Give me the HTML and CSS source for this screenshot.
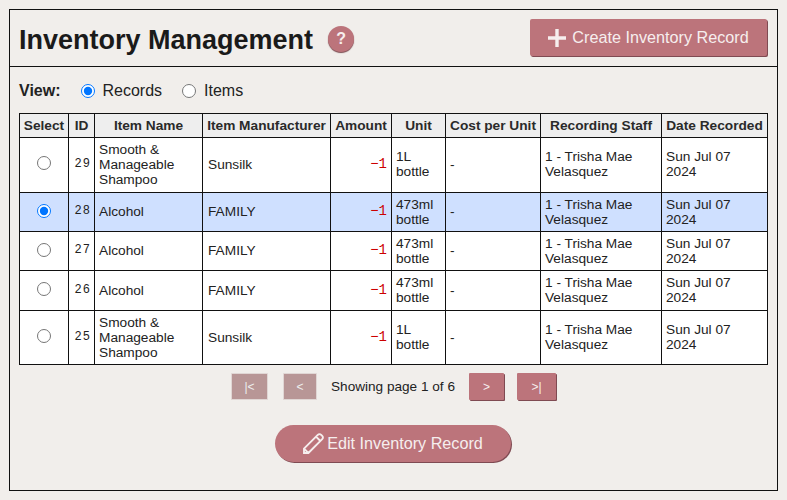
FILE: index.html
```html
<!DOCTYPE html>
<html lang="en">
<head>
    <meta charset="UTF-8">
    <meta name="viewport" content="width=device-width, initial-scale=1.0">
    <title>Inventory Management</title>
    <link rel="stylesheet" href="styles.css">
</head>
<body>

<div class="panel">
    <header class="panel-head">
        <h1>Inventory Management</h1>
        <span class="help">?</span>
        <button type="button" class="btn btn-create">
            <svg class="plus" width="18" height="18" viewBox="0 0 18 18"><path d="M9 0v18M0 9h18" stroke="#f6eeee" stroke-width="3.4" fill="none"/></svg>
            Create Inventory Record
        </button>
    </header>

    <div class="panel-body">
        <form class="view-row">
            <span class="view-label">View:</span>
            <label><input type="radio" name="view" checked> Records</label>
            <label><input type="radio" name="view"> Items</label>
        </form>

        <table class="records">
            <colgroup>
                <col class="c-select"><col class="c-id"><col class="c-name"><col class="c-maker"><col class="c-amount">
                <col class="c-unit"><col class="c-cost"><col class="c-staff"><col class="c-date">
            </colgroup>
            <thead>
                <tr>
                    <th>Select</th><th>ID</th><th>Item Name</th><th>Item Manufacturer</th><th>Amount</th>
                    <th>Unit</th><th>Cost per Unit</th><th>Recording Staff</th><th>Date Recorded</th>
                </tr>
            </thead>
            <tbody>
                <tr class="tall top">
                    <td class="sel"><input type="radio" name="rec"></td><td class="num">29</td>
                    <td>Smooth &amp; Manageable Shampoo</td><td class="maker">Sunsilk</td><td class="amt">&minus;1</td>
                    <td>1L bottle</td><td>-</td><td>1 - Trisha Mae Velasquez</td><td>Sun Jul 07 2024</td>
                </tr>
                <tr class="picked">
                    <td class="sel"><input type="radio" name="rec" checked></td><td class="num">28</td>
                    <td>Alcohol</td><td class="maker">FAMILY</td><td class="amt">&minus;1</td>
                    <td>473ml bottle</td><td>-</td><td>1 - Trisha Mae Velasquez</td><td>Sun Jul 07 2024</td>
                </tr>
                <tr>
                    <td class="sel"><input type="radio" name="rec"></td><td class="num">27</td>
                    <td>Alcohol</td><td class="maker">FAMILY</td><td class="amt">&minus;1</td>
                    <td>473ml bottle</td><td>-</td><td>1 - Trisha Mae Velasquez</td><td>Sun Jul 07 2024</td>
                </tr>
                <tr class="wide">
                    <td class="sel"><input type="radio" name="rec"></td><td class="num">26</td>
                    <td>Alcohol</td><td class="maker">FAMILY</td><td class="amt">&minus;1</td>
                    <td>473ml bottle</td><td>-</td><td>1 - Trisha Mae Velasquez</td><td>Sun Jul 07 2024</td>
                </tr>
                <tr class="tall">
                    <td class="sel"><input type="radio" name="rec"></td><td class="num">25</td>
                    <td>Smooth &amp; Manageable Shampoo</td><td class="maker">Sunsilk</td><td class="amt">&minus;1</td>
                    <td>1L bottle</td><td>-</td><td>1 - Trisha Mae Velasquez</td><td>Sun Jul 07 2024</td>
                </tr>
            </tbody>
        </table>

        <div class="pager">
            <button type="button" class="btn page-btn first" disabled>|&lt;</button>
            <button type="button" class="btn page-btn prev" disabled>&lt;</button>
            <span class="page-info">Showing page 1 of 6</span>
            <button type="button" class="btn page-btn next">&gt;</button>
            <button type="button" class="btn page-btn last">&gt;|</button>
        </div>

        <div class="actions">
            <button type="button" class="btn btn-edit">
                <svg class="pencil" width="21" height="21" viewBox="0 0 21 21"><path d="M1 20v-4.4L14.8 1.8a2.4 2.4 0 0 1 3.4 0l1 1a2.4 2.4 0 0 1 0 3.4L5.4 20zM13 3.6l4.4 4.4M1 15.6l4.4 4.4" stroke="#f6eeee" stroke-width="1.9" fill="none"/></svg>
                Edit Inventory Record
            </button>
        </div>
    </div>
</div>

</body>
</html>
```

FILE: styles.css
```css
* { box-sizing: border-box; }
html, body { height: 100%; }
body { margin: 0; padding: 9px; background: #f1eeeb; color: #111; font-family: 'Liberation Sans', Arial, sans-serif; }

.panel { border: 1px solid #111; height: 482px; }
.panel-head { display: flex; align-items: center; height: 57px; padding: 0 10px 0 9px; border-bottom: 1px solid #111; }
h1 { margin: 5px 0 0; font-size: 27px; font-weight: bold; color: #1a1a1a; }
.help {
    width: 26px; height: 26px; margin: 2px 0 0 15px; border-radius: 50%;
    background: #bc747b; color: #f6eeee; font-weight: bold; font-size: 16px;
    display: flex; align-items: center; justify-content: center;
    box-shadow: 0 1px 1px #7a4a50;
}

.btn { background: #bc747b; color: #f6eeee; border: none; font-family: inherit; box-shadow: 1px 1px 0 #7f4a52; padding: 0; }
.btn-create {
    margin-left: auto; width: 237px; height: 37px; margin-top: -1px; border-radius: 2px; font-size: 16.2px;
    display: flex; align-items: center; justify-content: center; gap: 6px;
}

.panel-body { padding: 0 9px; }
.view-row { display: flex; align-items: center; height: 47px; font-size: 16px; color: #222; }
.view-label { font-weight: bold; margin-right: 20px; }
.view-row label { display: flex; align-items: center; margin-right: 20px; }
.view-row input { width: 14px; height: 14px; margin: 0 8px 0 0; accent-color: #0075ff; }

.records { width: 748px; margin-top: -1px; table-layout: fixed; border-collapse: collapse; background: #fff; font-size: 13.7px; color: #222; }
.records th, .records td { border: 1px solid #111; }
.records th { height: 24px; padding: 0; background: #eeeeee; font-weight: bold; color: #2a2a2a; text-align: center; }
.records td { padding: 0 4px 1px; line-height: 15px; height: 39px; }
.records tr.tall td { height: 54px; }
.records tr.wide td { height: 40px; }
.records tr.top td { height: 55px; padding-bottom: 2px; }
.records tr.picked td { background: #cfe0ff; }
.records .sel input { display: block; width: 14px; height: 14px; margin: 0 auto 2px; }
.records .maker { padding-left: 5px; }
.records .num { font-family: 'Liberation Mono', monospace; font-size: 12px; letter-spacing: 1px; text-align: right; padding: 0 3px 1px 0; }
.records .amt { font-family: 'Liberation Mono', monospace; font-size: 14px; text-align: right; color: #c00; }

.c-select { width: 49px; }
.c-id { width: 26px; }
.c-name { width: 108px; }
.c-maker { width: 128px; }
.c-amount { width: 61px; }
.c-unit { width: 54px; }
.c-cost { width: 95px; }
.c-staff { width: 121px; }
.c-date { width: 106px; }

.pager { display: flex; align-items: center; justify-content: center; height: 43px; font-size: 13.6px; }
.page-info { margin: 0 14px; color: #222; }
.page-btn { height: 27px; font-size: 12px; border-radius: 1px; }
.page-btn:disabled { background: #b89696; color: #eee; box-shadow: none; border: 1px solid #e0d6d4; }
.first { width: 37px; margin-right: 15px; }
.prev { width: 34px; }
.next { width: 35px; margin-right: 13px; }
.last { width: 39px; }

.actions { display: flex; justify-content: center; margin-top: 17px; }
.btn-edit {
    width: 236px; height: 37px; margin-right: 1px; border-radius: 19px; font-size: 16.2px;
    display: flex; align-items: center; justify-content: center; gap: 3px;
}
```
